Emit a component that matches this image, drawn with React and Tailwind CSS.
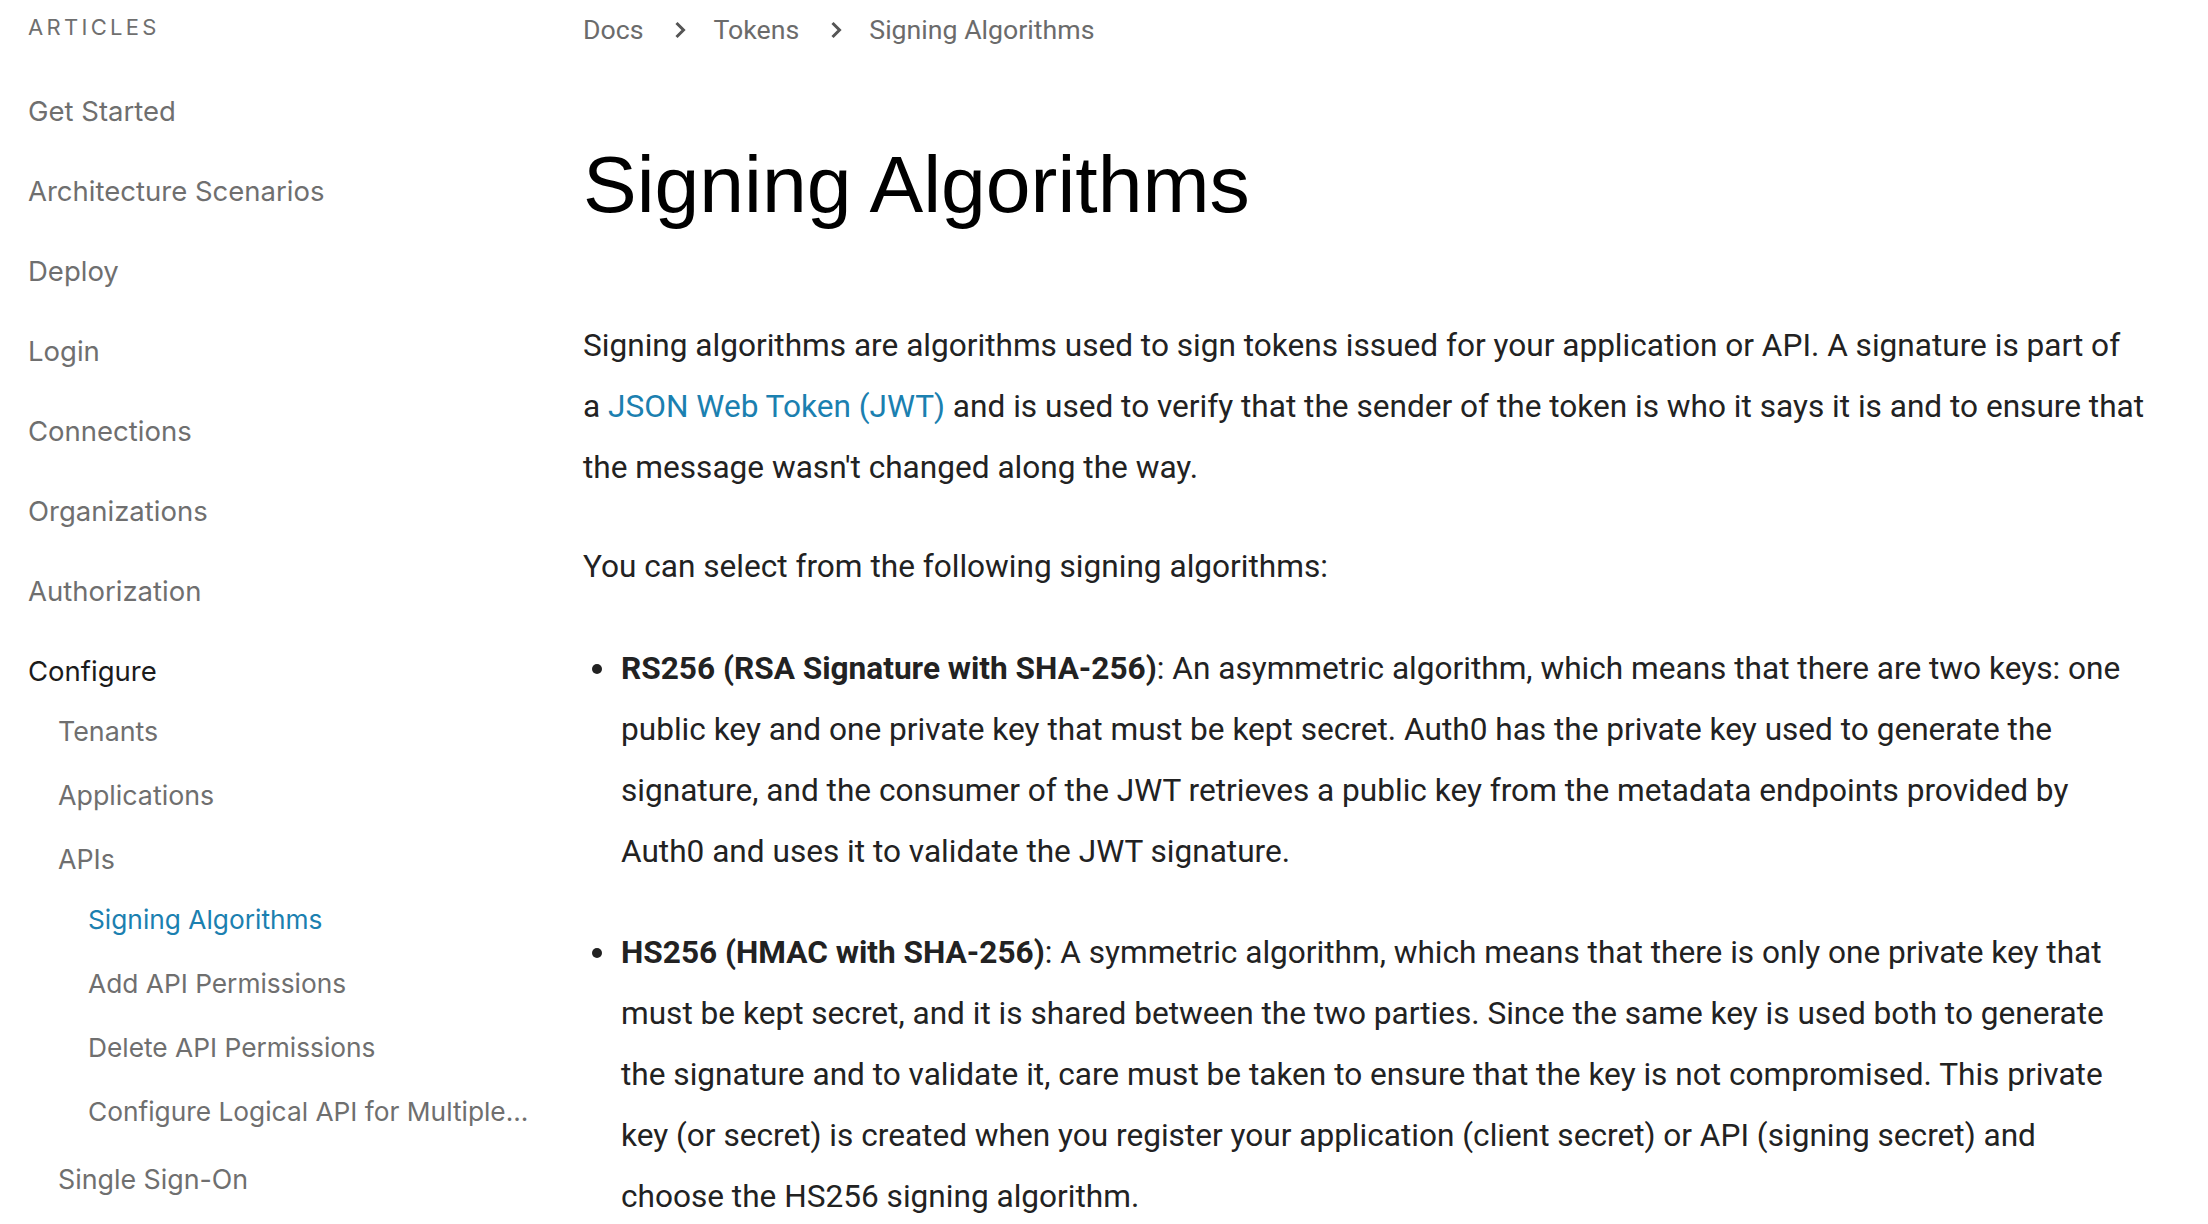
import React from 'react';

const topItems = [
  'Get Started',
  'Architecture Scenarios',
  'Deploy',
  'Login',
  'Connections',
  'Organizations',
  'Authorization',
];

const apiItems = [
  { label: 'Signing Algorithms', active: true },
  { label: 'Add API Permissions' },
  { label: 'Delete API Permissions' },
  { label: 'Configure Logical API for Multiple...' },
];

const Chevron = () => (
  <svg width="12" height="18" viewBox="0 0 12 18" className="ml-[31px] mr-[27px] shrink-0">
    <polyline points="2.5,2 9.5,9 2.5,16" fill="none" stroke="#555" strokeWidth="3" strokeLinejoin="miter" />
  </svg>
);

const Sidebar = () => (
  <aside className="w-[560px] shrink-0 pl-7 pt-[13px] font-['Inter',sans-serif] text-[#6f6f6f]">
    <div className="text-[22px] leading-[28px] tracking-[0.15em] uppercase">Articles</div>

    <ul className="mt-[52px] flex flex-col gap-[44px] text-[27.5px] leading-[36px]">
      {topItems.map((item) => (
        <li key={item} className="whitespace-nowrap">{item}</li>
      ))}
      <li>
        <div className="text-[#1b1b1b]">Configure</div>
        <ul className="mt-[24px] flex flex-col gap-7 pl-[30px] text-[26.8px]">
          <li>Tenants</li>
          <li>Applications</li>
          <li>
            <div>APIs</div>
            <ul className="mt-[25px] flex flex-col gap-7 pl-[30px] text-[26.3px]">
              {apiItems.map((item) => (
                <li
                  key={item.label}
                  className={`whitespace-nowrap ${item.active ? 'text-[#1b80b0]' : ''}`}
                >
                  {item.label}
                </li>
              ))}
            </ul>
          </li>
          <li className="mt-[3px]">Single Sign-On</li>
        </ul>
      </li>
    </ul>
  </aside>
);

const Bullet = ({ title, children }) => (
  <li className="flex">
    <div className="w-[38px] h-[61px] shrink-0 flex items-center pl-[9px]">
      <span className="block w-[10px] h-[10px] rounded-full bg-[#222]" />
    </div>
    <div>
      <strong className="font-bold">{title}</strong>: {children}
    </div>
  </li>
);

export default function App() {
  return (
    <div className="w-[2208px] h-[1224px] overflow-hidden bg-white flex">
      <Sidebar />

      <main className="pl-[23px] w-[1602px] font-['Roboto',sans-serif]">
        {/* Breadcrumb */}
        <nav className="pt-3 flex items-center text-[26.7px] leading-[36px] text-[#6b6b6b]">
          <span>Docs</span>
          <Chevron />
          <span>Tokens</span>
          <Chevron />
          <span>Signing Algorithms</span>
        </nav>

        <h1 className="mt-[96px] font-['Liberation_Sans',Arial,sans-serif] text-[80.5px] leading-[80px] text-black">
          Signing Algorithms
        </h1>

        <div className="mt-[91px] w-[1560px] text-[31.6px] leading-[61px] text-[#222]">
          <p className="w-[1600px]">
            Signing algorithms are algorithms used to sign tokens issued for your application or API. A signature is part of
            <br />
            a <a href="#" className="text-[#1b80b0]">JSON Web Token (JWT)</a> and is used to verify that the sender of the token is who it says it is and to ensure that the message wasn't changed along the way.
          </p>

          <p className="mt-[38px]">You can select from the following signing algorithms:</p>

          <ul className="mt-[41px] flex flex-col gap-[40px]">
            <Bullet title="RS256 (RSA Signature with SHA-256)">
              An asymmetric algorithm, which means that there are two keys: one public key and one private key that must be kept secret. Auth0 has the private key used to generate the signature, and the consumer of the JWT retrieves a public key from the metadata endpoints provided by Auth0 and uses it to validate the JWT signature.
            </Bullet>
            <Bullet title="HS256 (HMAC with SHA-256)">
              A symmetric algorithm, which means that there is only one private key that must be kept secret, and it is shared between the two parties. Since the same key is used both to generate the signature and to validate it, care must be taken to ensure that the key is not compromised. This private key (or secret) is created when you register your application (client secret) or API (signing secret) and choose the HS256 signing algorithm.
            </Bullet>
          </ul>
        </div>
      </main>
    </div>
  );
}
